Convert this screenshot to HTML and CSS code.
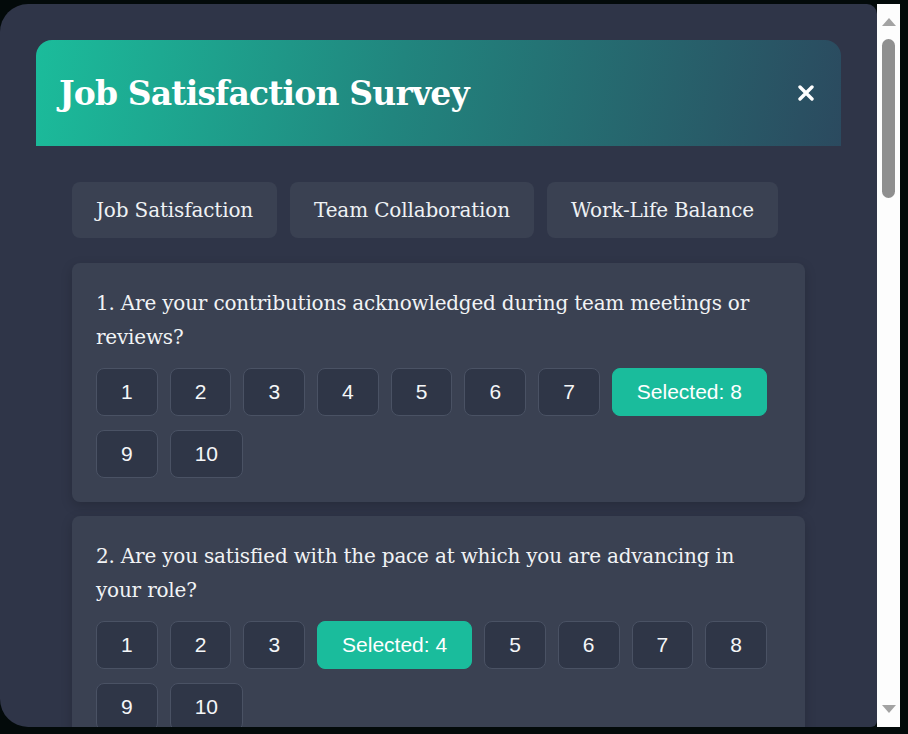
FILE: index.html
```html
<!DOCTYPE html>
<html lang="en">
<head>
<meta charset="utf-8">
<title>Job Satisfaction Survey</title>
<link rel="stylesheet" href="styles.css">
</head>
<body>
<div class="modal">
  <div class="viewport">
    <div class="modal-inner">
      <header class="modal-header">
        <h1 class="modal-title">Job Satisfaction Survey</h1>
        <button class="close-btn" aria-label="Close">
          <svg width="16" height="16" viewBox="0 0 16 16"><path d="M2 2 L14 14 M14 2 L2 14" stroke="#fff" stroke-width="3.4" stroke-linecap="round"/></svg>
        </button>
      </header>
      <div class="survey-body">
        <nav class="tabs">
          <button class="tab">Job Satisfaction</button>
          <button class="tab">Team Collaboration</button>
          <button class="tab">Work-Life Balance</button>
        </nav>
        <div class="questions" id="questions"></div>
      </div>
    </div>
  </div>
  <div class="scrollbar" aria-hidden="true">
    <svg class="arrow" width="14" height="8" viewBox="0 0 14 8"><path d="M0 8 L7 0 L14 8 Z" fill="#a3a3a3"/></svg>
    <div class="thumb"></div>
    <div class="track-space"></div>
    <svg class="arrow" width="14" height="8" viewBox="0 0 14 8"><path d="M0 0 L14 0 L7 8 Z" fill="#a3a3a3"/></svg>
  </div>
</div>
<script>
const qs = [
  ["Are your contributions acknowledged during team meetings or reviews?", 8],
  ["Are you satisfied with the pace at which you are advancing in your role?", 4],
  ["How satisfied are you with the recognition you receive for your work?", 0],
  ["Do you feel your responsibilities match your skills and experience?", 0],
  ["How likely are you to recommend this company as a place to work?", 0],
  ["Do you have the tools and resources needed to do your job well?", 0],
  ["How satisfied are you with the opportunities for learning and development?", 0],
  ["Do you feel your manager supports your professional growth?", 0],
  ["How fairly do you feel you are compensated for the work you do?", 0],
  ["Do you find your daily tasks meaningful and engaging?", 0],
  ["How satisfied are you with your job overall?", 0]
];
const wrap = document.getElementById('questions');
qs.forEach((q, i) => {
  const card = document.createElement('section');
  card.className = 'card';
  const p = document.createElement('p');
  p.className = 'question';
  p.textContent = (i + 1) + '. ' + q[0];
  card.appendChild(p);
  const row = document.createElement('div');
  row.className = 'scale';
  for (let n = 1; n <= 10; n++) {
    const b = document.createElement('button');
    b.className = 'score' + (n === q[1] ? ' selected' : '');
    b.textContent = n === q[1] ? 'Selected: ' + n : String(n);
    row.appendChild(b);
  }
  card.appendChild(row);
  wrap.appendChild(card);
});
</script>
</body>
</html>
```

FILE: styles.css
```css
html, body {
  margin: 0;
  padding: 0;
}
body {
  background: #030a0a;
  height: 734px;
  overflow: hidden;
}
.modal {
  display: flex;
  margin: 4px 8px 0 0;
  height: 723px;
}
.viewport {
  flex: 1;
  min-width: 0;
  overflow: hidden;
  background: #2f3548;
  border-radius: 28px 10px 6px 28px;
}
.scrollbar {
  width: 23px;
  flex: none;
  background: #fdfdfd;
  display: flex;
  flex-direction: column;
  align-items: center;
  box-sizing: border-box;
  padding: 14px 0 14px 0;
}
.arrow {
  display: block;
  flex: none;
}
.thumb {
  margin-top: 13px;
  width: 13px;
  height: 159px;
  border-radius: 7px;
  background: #8f8f8f;
  flex: none;
}
.track-space {
  flex: 1;
}
.modal-inner {
  padding: 36px 36px 36px 36px;
}
.modal-header {
  display: flex;
  align-items: center;
  justify-content: space-between;
  height: 106px;
  box-sizing: border-box;
  padding: 0 27px 0 23px;
  border-radius: 16px 16px 0 0;
  background: linear-gradient(100deg, #1bbc9b 0%, #21857e 45%, #2b4a5f 100%);
}
.modal-title {
  margin: 0;
  font-family: "DejaVu Serif", "Liberation Serif", serif;
  font-weight: bold;
  font-size: 33px;
  letter-spacing: -0.85px;
  color: #ffffff;
}
.close-btn {
  border: 0;
  background: none;
  padding: 0;
  width: 16px;
  height: 16px;
  display: flex;
  cursor: pointer;
}
.survey-body {
  padding: 36px 36px 0 36px;
}
.tabs {
  display: flex;
  gap: 13px;
  margin-bottom: 25px;
}
.tab {
  height: 56px;
  padding: 0 24px;
  border: 0;
  border-radius: 8px;
  background: #3a4152;
  color: #eef1f4;
  font-family: "DejaVu Serif", "Liberation Serif", serif;
  font-size: 20px;
  letter-spacing: -0.15px;
}
.questions {
  display: flex;
  flex-direction: column;
  gap: 14px;
}
.card {
  background: #3a4152;
  border-radius: 8px;
  padding: 23px 24px 24px 24px;
  box-shadow: 0 4px 12px rgba(0, 0, 0, 0.18);
}
.question {
  margin: 0 0 14px 0;
  font-family: "DejaVu Serif", "Liberation Serif", serif;
  font-size: 20px;
  letter-spacing: -0.2px;
  line-height: 34px;
  color: #f1f3f5;
}
.scale {
  display: flex;
  flex-wrap: wrap;
  gap: 14px 12px;
}
.score {
  height: 48px;
  padding: 0 24px;
  border: 1px solid #4a5264;
  border-radius: 8px;
  background: #2f3647;
  color: #f5f6f8;
  font-family: "Liberation Sans", Arial, sans-serif;
  font-size: 21px;
}
.score.selected {
  background: #1abc9c;
  border-color: #1abc9c;
  color: #ffffff;
}
```
